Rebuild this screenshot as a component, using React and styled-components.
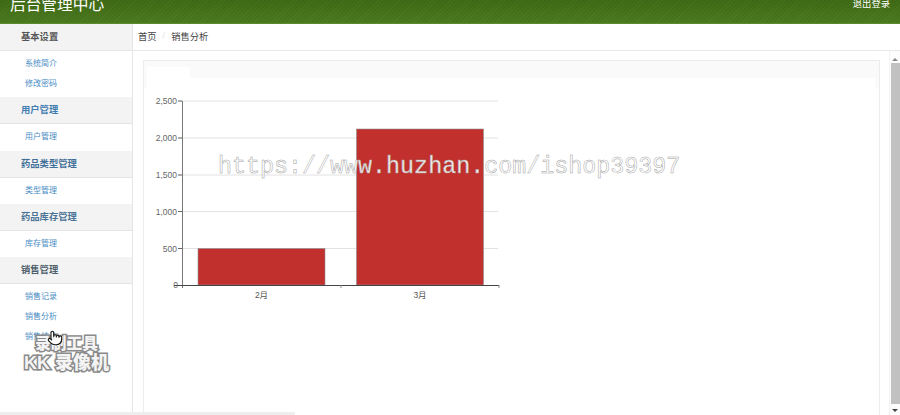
import React from 'react'
import styled, { createGlobalStyle } from 'styled-components'
import { Pointer } from 'lucide-react'

const menu = [
  { title: '基本设置', tone: '#555', items: ['系统简介', '修改密码'] },
  { title: '用户管理', tone: '#3f7cb0', items: ['用户管理'] },
  { title: '药品类型管理', tone: '#3f6f98', items: ['类型管理'] },
  { title: '药品库存管理', tone: '#4a7396', items: ['库存管理'] },
  { title: '销售管理', tone: '#4f5f6c', items: ['销售记录', '销售分析', '销售统计'] },
]

const yTicks = [
  { label: '2,500', y: 101 },
  { label: '2,000', y: 138 },
  { label: '1,500', y: 175 },
  { label: '1,000', y: 211.5 },
  { label: '500', y: 248.5 },
]

const bars = [
  { label: '2月', x: 198, y: 248.5 },
  { label: '3月', x: 356.5, y: 129 },
]

// svg origin sits at page position (150, 95)
const SalesChart = () => (
  <ChartSvg width='360' height='212' viewBox='150 95 360 212'>
    {yTicks.map(t => (
      <g key={t.label}>
        <line x1='178' x2='498' y1={t.y} y2={t.y} stroke='#e2e2e2' />
        <line x1='178' x2='182' y1={t.y} y2={t.y} stroke='#666' />
        <text x='177' y={t.y + 3} textAnchor='end' fontSize='8.5' fill='#666'>
          {t.label}
        </text>
      </g>
    ))}
    {bars.map(b => (
      <g key={b.label}>
        <rect x={b.x} y={b.y} width='127' height={285 - b.y} fill='#c1302c' stroke='#8d9296' strokeWidth='0.6' />
        <text x={b.x + 63.5} y='298' textAnchor='middle' fontSize='8.5' fill='#555'>
          {b.label}
        </text>
      </g>
    ))}
    <line x1='182.5' x2='182.5' y1='101' y2='288' stroke='#777' />
    <line x1='174' x2='499' y1='285.5' y2='285.5' stroke='#444' />
    <line x1='341' x2='341' y1='285' y2='288' stroke='#888' />
    <line x1='499' x2='499' y1='285' y2='288' stroke='#888' />
    <text x='178' y='288' textAnchor='end' fontSize='8.5' fill='#666'>
      0
    </text>
  </ChartSvg>
)

export default function App() {
  return (
    <Page>
      <GlobalStyle />
      <TopBar>
        <Brand>后台管理中心</Brand>
        <Logout>退出登录</Logout>
      </TopBar>
      <Body>
        <Sidebar>
          {menu.map(group => (
            <div key={group.title}>
              <GroupTitle $tone={group.tone}>{group.title}</GroupTitle>
              <GroupList>
                {group.items.map(item => (
                  <MenuLink key={item}>{item}</MenuLink>
                ))}
              </GroupList>
            </div>
          ))}
        </Sidebar>
        <Main>
          <Breadcrumb>
            <span>首页</span>
            <Slash>/</Slash>
            <span>销售分析</span>
          </Breadcrumb>
          <ContentRow>
            <Content>
              <Panel>
                <PanelHead>
                  <TabRow>
                    <ActiveTab />
                  </TabRow>
                  <HeadFill />
                </PanelHead>
                <SalesChart />
              </Panel>
            </Content>
            <Scrollbar>
              <ArrowUp />
              <Thumb />
              <ArrowDown />
            </Scrollbar>
          </ContentRow>
        </Main>
      </Body>
      <Watermark>https://www.huzhan.com/ishop39397</Watermark>
      <RecorderMark>
        <RecorderLine $size={15.7}>录制工具</RecorderLine>
        <RecorderLine $size={18}>KK 录像机</RecorderLine>
      </RecorderMark>
      <Cursor>
        <Pointer size={16} strokeWidth={1.6} color='#111' fill='#fff' />
      </Cursor>
      <BottomScroll />
    </Page>
  )
}

const GlobalStyle = createGlobalStyle`
  html, body {
    margin: 0;
    padding: 0;
    background: #fff;
    overflow: hidden;
  }
  * {
    box-sizing: border-box;
  }
`

const Page = styled.div`
  position: relative;
  width: 900px;
  height: 415px;
  overflow: hidden;
  display: flex;
  flex-direction: column;
  font-family: 'Liberation Sans', 'Noto Sans CJK SC', sans-serif;
  background: #fff;
`

const TopBar = styled.header`
  height: 24px;
  flex: none;
  display: flex;
  justify-content: space-between;
  padding: 0 10px;
  overflow: hidden;
  border-bottom: 1px solid #5c8a2b;
  background:
    repeating-linear-gradient(135deg, rgba(255, 255, 255, 0.025) 0 1px, rgba(0, 0, 0, 0.025) 1px 3px),
    linear-gradient(#3f6a14, #4a7a1e);
`

const Brand = styled.div`
  margin-top: -6px;
  font-size: 15.7px;
  line-height: 22px;
  color: #fff;
`

const Logout = styled.div`
  margin-top: -2px;
  font-size: 9.3px;
  line-height: 12px;
  color: #fff;
`

const Body = styled.div`
  flex: 1;
  min-height: 0;
  display: flex;
`

const Sidebar = styled.aside`
  width: 133px;
  flex: none;
  background: #fff;
  border-right: 1px solid #e6e6e6;
`

const GroupTitle = styled.div`
  height: 27px;
  padding-left: 21px;
  font-size: 9.3px;
  font-weight: 700;
  line-height: 27px;
  color: ${props => props.$tone};
  background: #f3f3f3;
  border-bottom: 1px solid #e4e4e4;
`

const GroupList = styled.div`
  display: flex;
  flex-direction: column;
  padding: 3px 0 3.3px;
`

const MenuLink = styled.a`
  height: 20px;
  padding-left: 25px;
  font-size: 8px;
  line-height: 20px;
  color: #4a8cc4;
`

const Main = styled.main`
  flex: 1;
  min-width: 0;
  display: flex;
  flex-direction: column;
`

const Breadcrumb = styled.nav`
  height: 27px;
  flex: none;
  display: flex;
  align-items: center;
  gap: 5px;
  padding: 0 0 2px 5px;
  font-size: 9.3px;
  color: #444;
  border-bottom: 1px solid #e8e8e8;
`

const Slash = styled.span`
  color: #e4e4e4;
  padding: 0 1px;
`

const ContentRow = styled.div`
  flex: 1;
  min-height: 0;
  display: flex;
`

const Content = styled.div`
  flex: 1;
  min-width: 0;
  padding: 9px 9px 0 10px;
`

const Panel = styled.section`
  height: 100%;
  background: #fff;
  border: 1px solid #ececec;
  border-bottom: none;
`

const PanelHead = styled.div`
  height: 27px;
  display: flex;
  flex-direction: column;
  padding: 6px 4px 0 3px;
  background: #fafafa;
`

const TabRow = styled.div`
  height: 11px;
  flex: none;
`

const ActiveTab = styled.div`
  width: 43px;
  height: 11px;
  background: #fff;
`

const HeadFill = styled.div`
  flex: 1;
  background: #fff;
`

const ChartSvg = styled.svg`
  display: block;
  margin: 7px 0 0 6px;
  font-family: 'Liberation Sans', 'Noto Sans CJK SC', sans-serif;
`

const Scrollbar = styled.div`
  width: 11px;
  flex: none;
  display: flex;
  flex-direction: column;
  align-items: center;
  padding: 7px 0 3px;
  background: #fdfdfd;
  border-left: 1px solid #f2f2f2;
`

const ArrowUp = styled.div`
  width: 0;
  height: 0;
  border-left: 3px solid transparent;
  border-right: 3px solid transparent;
  border-bottom: 3px solid #888;
`

const ArrowDown = styled.div`
  width: 0;
  height: 0;
  border-left: 3px solid transparent;
  border-right: 3px solid transparent;
  border-top: 3px solid #444;
`

const Thumb = styled.div`
  flex: 1;
  width: 9px;
  margin: 2px 0 5px;
  background: #c1c1c1;
`

const Watermark = styled.div`
  position: absolute;
  left: 218px;
  top: 152px;
  font-family: 'Liberation Mono', monospace;
  font-size: 23.35px;
  line-height: 30px;
  white-space: nowrap;
  color: rgba(255, 255, 255, 0.92);
  -webkit-text-stroke: 0.5px #a3a3a3;
`

const RecorderMark = styled.div`
  position: absolute;
  left: 23px;
  top: 334px;
  width: 87px;
  display: flex;
  flex-direction: column;
  align-items: center;
  gap: 1px;
`

const RecorderLine = styled.span`
  font-size: ${props => props.$size}px;
  font-weight: 900;
  line-height: 19px;
  white-space: nowrap;
  color: #f4f4f4;
  -webkit-text-stroke: 3px #8a8a8a;
  paint-order: stroke fill;
`

const Cursor = styled.div`
  position: absolute;
  left: 47px;
  top: 330px;
  line-height: 0;
`

const BottomScroll = styled.div`
  position: absolute;
  left: 0;
  bottom: 0;
  width: 295px;
  height: 3px;
  background: #eeeeee;
`
